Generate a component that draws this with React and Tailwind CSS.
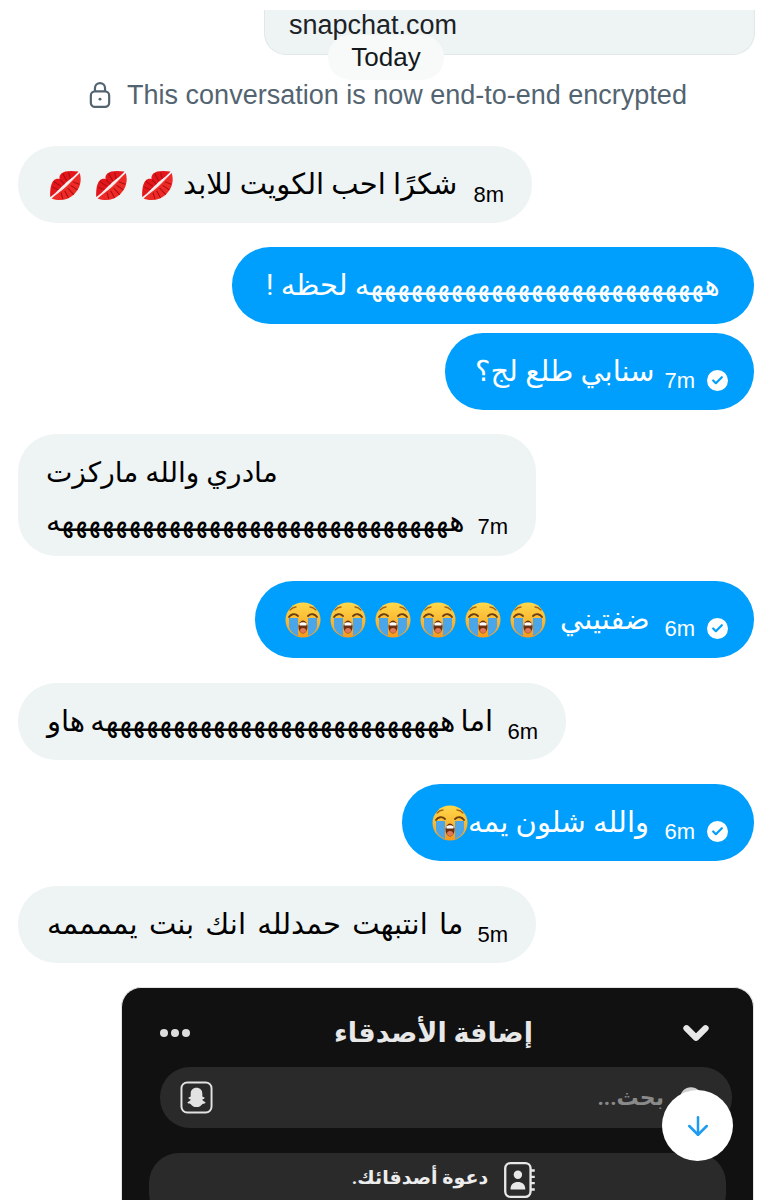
import { ArrowDown, ChevronDown, Check } from "lucide-react";

const ar = "font-['Roboto','Noto_Sans','DejaVu_Sans',sans-serif]";

const KissMark = () => (
    <svg viewBox="0 0 32 32" className="w-[36px] h-[32px] shrink-0">
        <g transform="rotate(-42 16 16)">
            <path d="M-3 15c5-6 10-10 14-10 2 0 4 1 5 3 1-2 3-3 5-3 4 0 9 4 14 10-5 1-10 0-19 0S2 16-3 15z" fill="#e3161b" />
            <path d="M-3 17c6 0 13 1 19 1s13-1 19-1c-4 8-11 12-19 12S1 25-3 17z" fill="#ee2a26" />
            <path d="M5 9l3 6M10 6l2 8M16 9v6M22 6l-2 8M27 9l-3 6M5 25l3-6M10 28l2-8M16 29v-9M22 28l-2-8M27 25l-3-6" stroke="#a50d12" strokeWidth="1" />
            <path d="M2 16.500c5 .5 9 .8 14 .8s9-.3 14-.8" stroke="#ffd9d6" strokeWidth="0.900" fill="none" />
        </g>
    </svg>
);

const CryFace = () => (
    <svg viewBox="0 0 36 36" className="w-[36px] h-[36px] shrink-0">
        <defs>
            <linearGradient id="face" x1="0" y1="0" x2="0" y2="1">
                <stop offset="0" stopColor="#ffd84a" />
                <stop offset="1" stopColor="#f59a1e" />
            </linearGradient>
        </defs>
        <circle cx="18" cy="18" r="17.500" fill="url(#face)" />
        <path d="M4 16h9v18c-5-2-8-5-9-9zM23 16h9v9c-1 4-4 7-9 9z" fill="#4aa6e8" />
        <path d="M4 15c2-3 6-4 9-1M23 14c3-3 7-2 9 1" fill="none" stroke="#6b3d12" strokeWidth="1.800" strokeLinecap="round" />
        <path d="M5 8c2-2 4-3 6-3M25 5c2 0 4 1 6 3" fill="none" stroke="#a9641a" strokeWidth="1.400" strokeLinecap="round" />
        <ellipse cx="18" cy="25" rx="4.500" ry="6.500" fill="#6b2f10" />
        <path d="M14.200 21.500c2.500-1.800 5-1.800 7.600 0l-.4 2h-6.800z" fill="#fff" />
        <ellipse cx="18" cy="28.500" rx="3" ry="2.500" fill="#e2795a" />
    </svg>
);

const Time = ({ children, className = "" }) => (
    <span className={`font-['Liberation_Sans',sans-serif] text-[22px] leading-none ${className}`}>{children}</span>
);

const Sent = () => (
    <span className="w-[21px] h-[21px] rounded-full bg-white flex items-center justify-center shrink-0">
        <Check size={13} strokeWidth={4} className="text-[#009ffd]" />
    </span>
);

const Received = ({ width, text, time, emoji, spacing = "" }) => (
    <div className={`${width} h-[77px] rounded-[38px] bg-[#eef3f4] flex items-center justify-between pl-[29px] pr-[28px] text-black`}>
        <div className="flex items-center gap-[8px]">
            {emoji}
            <span dir="rtl" className={`${ar} text-[29px] leading-none whitespace-nowrap ${spacing}`}>{text}</span>
        </div>
        <Time className="mt-[20px]">{time}</Time>
    </div>
);

const Mine = ({ width, text, time, emoji, gap = "gap-[16px]" }) => (
    <div className={`${width} h-[77px] rounded-[38px] bg-[#009ffd] flex items-center justify-between pl-[30px] pr-[26px] text-white self-end`}>
        <div className={`flex items-center ${gap}`}>
            {emoji}
            <span dir="rtl" className={`${ar} text-[29px] leading-none whitespace-nowrap`}>{text}</span>
        </div>
        <div className="flex items-center gap-[12px] mt-[18px]">
            <Time>{time}</Time>
            <Sent />
        </div>
    </div>
);

const App = () => {
    return (
        <div className="relative w-[772px] h-[1200px] overflow-hidden bg-white flex flex-col px-[18px] pt-[10px] font-['Liberation_Sans',sans-serif]">
            <div className="shrink-0 self-end w-[491px] h-[45px] rounded-b-[22px] bg-[#eef3f4] border border-t-0 border-[#e1e8ea] pl-[24px] text-[27px] leading-[30px] text-[#1c2226] -mr-px">
                snapchat.com
            </div>

            <div className="shrink-0 self-center -mt-[20px] w-[116px] h-[45px] rounded-[22px] bg-[#f8fafa] text-[26px] leading-[45px] text-center text-[#14191c]">
                Today
            </div>

            <div className="shrink-0 flex items-center justify-center gap-[16px] text-[#536471] text-[27px] leading-[30px] ml-[4px]">
                <svg viewBox="0 0 24 30" className="w-[22px] h-[28px]" fill="none" stroke="#536471" strokeWidth="2.400">
                    <rect x="2" y="11" width="20" height="17" rx="4.500" />
                    <path d="M6.500 11V7.500a5.500 5.500 0 0 1 11 0V11" />
                    <circle cx="12" cy="19.500" r="1.600" fill="#536471" stroke="none" />
                </svg>
                <span>This conversation is now end-to-end encrypted</span>
            </div>

            <div className="flex flex-col mt-[36px] shrink-0">
                <Received
                    width="w-[514px]"
                    text="شكرًا احب الكويت للابد"
                    time="8m"
                    emoji={
                        <div className="flex items-center gap-[10px]">
                            <KissMark />
                            <KissMark />
                            <KissMark />
                        </div>
                    }
                />

                <div className="mt-[24px] self-end w-[522px] h-[77px] rounded-[38px] bg-[#009ffd] flex items-center justify-center text-white">
                    <span dir="rtl" className={`${ar} text-[29px] leading-none whitespace-nowrap`}>
                        ههههههههههههههههههههههههههه لحظه !
                    </span>
                </div>

                <div className="mt-[9px] flex flex-col">
                    <Mine width="w-[309px]" text="سنابي طلع لج؟" time="7m" />
                </div>

                <div className="mt-[24px] w-[518px] h-[122px] rounded-[38px] bg-[#eef3f4] px-[28px] pt-[24px] text-black flex flex-col gap-[16px]">
                    <span dir="rtl" className={`${ar} text-[28px] leading-[30px] self-start`}>مادري والله ماركزت</span>
                    <div className="flex items-center justify-between">
                        <span dir="rtl" className={`${ar} text-[29px] leading-none whitespace-nowrap`}>ههههههههههههههههههههههههههههههه</span>
                        <Time className="mt-[12px]">7m</Time>
                    </div>
                </div>

                <div className="mt-[25px] flex flex-col">
                    <Mine
                        width="w-[499px]"
                        text="ضفتيني"
                        time="6m"
                        gap="gap-[14px]"
                        emoji={
                            <div className="flex items-center gap-[9px]">
                                <CryFace />
                                <CryFace />
                                <CryFace />
                                <CryFace />
                                <CryFace />
                                <CryFace />
                            </div>
                        }
                    />
                </div>

                <div className="mt-[25px]">
                    <Received width="w-[548px]" text="اما ههههههههههههههههههههههههههه هاو" time="6m" spacing="[word-spacing:-2px]" />
                </div>

                <div className="mt-[24px] flex flex-col">
                    <Mine width="w-[352px]" text="والله شلون يمه" time="6m" gap="gap-[0px]" emoji={<CryFace />} />
                </div>

                <div className="mt-[25px]">
                    <Received width="w-[518px]" text="ما انتبهت حمدلله انك بنت يممممه" time="5m" spacing="[word-spacing:4px]" />
                </div>

                <div className="mt-[24px] self-end w-[633px] h-[260px] rounded-t-[20px] bg-[#111111] border border-[#e2e5e6] border-b-0 px-[28px] text-[#e8e8e8] shrink-0">
                    <div className="flex items-center justify-between h-[90px] pl-[10px] pr-[10px] mb-[-11px]">
                        <div className="flex gap-[3px]">
                            <span className="w-[8px] h-[8px] rounded-full bg-[#dcdcdc]"></span>
                            <span className="w-[8px] h-[8px] rounded-full bg-[#dcdcdc]"></span>
                            <span className="w-[8px] h-[8px] rounded-full bg-[#dcdcdc]"></span>
                        </div>
                        <span dir="rtl" className={`${ar} text-[27px] font-bold leading-none`}>إضافة الأصدقاء</span>
                        <ChevronDown size={38} strokeWidth={4} className="text-[#e8e8e8]" />
                    </div>

                    <div className="ml-[10px] mr-[-7px] h-[61px] rounded-[30px] bg-[#2a2a2a] flex items-center justify-between pl-[20px] pr-[28px]">
                        <svg viewBox="0 0 34 34" className="w-[33px] h-[33px]">
                            <rect x="1.500" y="1.500" width="31" height="31" rx="6" fill="none" stroke="#e2e2e2" strokeWidth="2" />
                            <path d="M17 7c3.800 0 6 2.800 6 6v3l2.500 1.200c-.3 1.200-1.700 1.400-2.600 1.900.3 1.800 3 2.100 3.600 3.300-.8 1.200-2.800.8-3.600 1.500-1.200 1.500-2.800 3-5.900 3s-4.700-1.500-5.900-3c-.8-.7-2.800-.3-3.600-1.500.6-1.200 3.300-1.500 3.600-3.300-.9-.5-2.300-.7-2.600-1.900L11 16v-3c0-3.200 2.200-6 6-6z" fill="#e2e2e2" />
                        </svg>
                        <div className="flex items-center gap-[14px]">
                            <span dir="rtl" className={`${ar} text-[22px] font-bold leading-none text-[#8a8a8a]`}>بحث...</span>
                            <svg viewBox="0 0 24 24" className="w-[26px] h-[26px]" fill="none" stroke="#d0d0d0" strokeWidth="4">
                                <circle cx="12" cy="12" r="8" />
                            </svg>
                        </div>
                    </div>

                    <div className="-ml-px mr-[-1px] mt-[25px] h-[70px] rounded-[30px] bg-[#2a2a2a] flex items-start justify-center gap-[15px] pt-[8px] pl-[14px]">
                        <span dir="rtl" className={`${ar} text-[19px] font-bold leading-[34px] text-[#ededed]`}>دعوة أصدقائك.</span>
                        <svg viewBox="0 0 32 36" className="w-[34px] h-[38px]" fill="none" stroke="#e8e8e8" strokeWidth="2.200">
                            <rect x="2" y="2" width="24" height="32" rx="5" />
                            <circle cx="14" cy="13" r="4" fill="#e8e8e8" stroke="none" />
                            <path d="M7 27c0-5 3-7 7-7s7 2 7 7z" fill="#e8e8e8" stroke="none" />
                            <path d="M26 9h4M26 15h4M26 21h4M26 27h4" />
                        </svg>
                    </div>
                </div>
            </div>

            <button className="absolute left-[662px] top-[1090px] w-[71px] h-[71px] rounded-full bg-white flex items-center justify-center">
                <ArrowDown size={30} strokeWidth={2} className="text-[#1d9bf0]" />
            </button>
        </div>
    );
};

export default App;
